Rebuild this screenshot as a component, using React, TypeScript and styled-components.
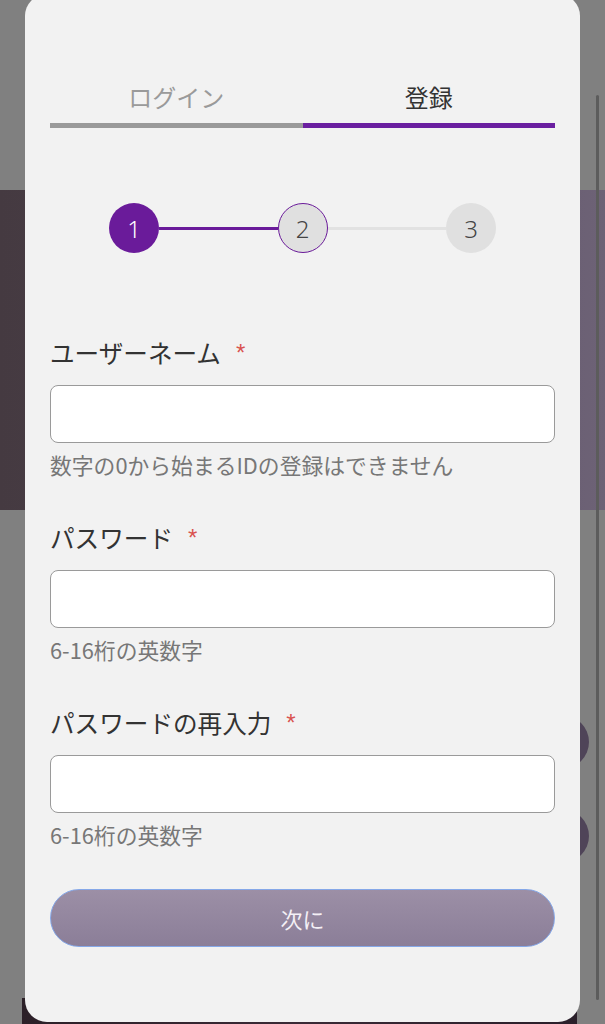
import { FunctionComponent } from 'react';
import styled, { createGlobalStyle } from 'styled-components';

const GlobalStyle = createGlobalStyle`
  html, body {
    margin: 0;
    padding: 0;
    background: #808080;
    font-family: "Noto Sans CJK JP", "Noto Sans", sans-serif;
    overflow: hidden;
  }
`;

const Backdrop = styled.div`
  position: relative;
  width: 605px;
  height: 1024px;
  background: #808080;
  overflow: hidden;
`;

const Banner = styled.div`
  margin-top: 190px;
  height: 320px;
  background: linear-gradient(90deg, #453a41 0%, #4b404c 45%, #685d70 85%, #6d6276 100%);
`;

const FloatButtons = styled.div`
  display: flex;
  flex-direction: column;
  align-items: flex-end;
  gap: 40px;
  margin-top: 205px;
  padding-right: 16px;
`;

const FloatDot = styled.div`
  width: 54px;
  height: 54px;
  border-radius: 50%;
  background: #4f4458;
`;

const BottomStrip = styled.div`
  position: absolute;
  left: 22px;
  right: 28px;
  bottom: 0;
  height: 26px;
  background: linear-gradient(90deg, #2c2028 0%, #3a2a36 50%, #2a1f2a 100%);
`;

const Scrollbar = styled.div`
  position: absolute;
  right: 6px;
  top: 95px;
  width: 3px;
  height: 905px;
  border-radius: 2px;
  background: #5c5c5c;
`;

const Modal = styled.div`
  position: absolute;
  left: 25px;
  top: -6px;
  width: 555px;
  height: 1028px;
  box-sizing: border-box;
  padding: 76px 25px 0;
  background: #f2f2f2;
  border-radius: 22px;
  display: flex;
  flex-direction: column;
`;

const Tabs = styled.div`
  display: grid;
  grid-template-columns: 1fr 1fr;
`;

const Tab = styled.div<{ $active?: boolean }>`
  height: 53px;
  line-height: 53px;
  text-align: center;
  font-size: 24px;
  color: ${(p) => (p.$active ? '#333333' : '#9a9a9a')};
  border-bottom: 5px solid ${(p) => (p.$active ? '#6a1fa0' : '#9a9a9a')};
`;

const Stepper = styled.div`
  display: flex;
  align-items: center;
  margin: 75px 59px 0;
`;

const StepDot = styled.div<{ $state: 'done' | 'current' | 'todo' }>`
  flex: none;
  width: 50px;
  height: 50px;
  box-sizing: border-box;
  border-radius: 50%;
  display: flex;
  align-items: center;
  justify-content: center;
  font-family: "Noto Sans", sans-serif;
  font-size: 24px;
  font-weight: 300;
  background: ${(p) => (p.$state === 'done' ? '#6a1b9a' : '#e0e0e0')};
  color: ${(p) => (p.$state === 'done' ? '#ffffff' : '#444444')};
  border: ${(p) => (p.$state === 'current' ? '1.5px solid #6a1b9a' : 'none')};
`;

const StepLine = styled.div<{ $done?: boolean }>`
  flex: 1;
  height: 3px;
  background: ${(p) => (p.$done ? '#6a1b9a' : '#e2e2e2')};
`;

const Form = styled.div`
  display: flex;
  flex-direction: column;
  gap: 44px;
  margin-top: 84px;
`;

const Field = styled.div`
  display: flex;
  flex-direction: column;
`;

const Label = styled.label`
  display: flex;
  align-items: center;
  height: 30px;
  font-size: 24.6px;
  color: #333333;
`;

const Required = styled.span`
  color: #d9534f;
  margin-left: 15px;
  font-family: "Liberation Sans", sans-serif;
  font-size: 24px;
  line-height: 1;
  margin-top: 2px;
`;

const Input = styled.input`
  margin-top: 18px;
  height: 58px;
  box-sizing: border-box;
  border: 1px solid #9a9a9a;
  border-radius: 8px;
  background: #ffffff;
  padding: 0 14px;
  font-size: 20px;
  outline: none;
`;

const Help = styled.div`
  margin-top: 9px;
  height: 26px;
  font-size: 21.8px;
  line-height: 26px;
  color: #777777;
  white-space: nowrap;
`;

const NextButton = styled.button`
  margin-top: 41px;
  height: 58px;
  border-radius: 29px;
  border: 1.5px solid #86a8e8;
  background: linear-gradient(180deg, #9c8fa6 0%, #8b7e98 100%);
  color: #f4f0f6;
  font-family: "Noto Sans CJK JP", "Noto Sans", sans-serif;
  font-size: 22px;
  cursor: pointer;
`;

type FieldDef = { label: string; help: string; type: string };

const fields: FieldDef[] = [
  { label: 'ユーザーネーム', help: '数字の0から始まるIDの登録はできません', type: 'text' },
  { label: 'パスワード', help: '6-16桁の英数字', type: 'password' },
  { label: 'パスワードの再入力', help: '6-16桁の英数字', type: 'password' },
];

const App: FunctionComponent = () => {
  return (
    <>
      <GlobalStyle />
      <Backdrop>
        <Banner />
        <FloatButtons>
          <FloatDot />
          <FloatDot />
        </FloatButtons>
        <BottomStrip />
        <Scrollbar />
        <Modal>
          <Tabs>
            <Tab>ログイン</Tab>
            <Tab $active>登録</Tab>
          </Tabs>
          <Stepper>
            <StepDot $state="done">1</StepDot>
            <StepLine $done />
            <StepDot $state="current">2</StepDot>
            <StepLine />
            <StepDot $state="todo">3</StepDot>
          </Stepper>
          <Form>
            {fields.map((f) => (
              <Field key={f.label}>
                <Label>
                  {f.label}
                  <Required>*</Required>
                </Label>
                <Input type={f.type} />
                <Help>{f.help}</Help>
              </Field>
            ))}
          </Form>
          <NextButton>次に</NextButton>
        </Modal>
      </Backdrop>
    </>
  );
};

export default App;
